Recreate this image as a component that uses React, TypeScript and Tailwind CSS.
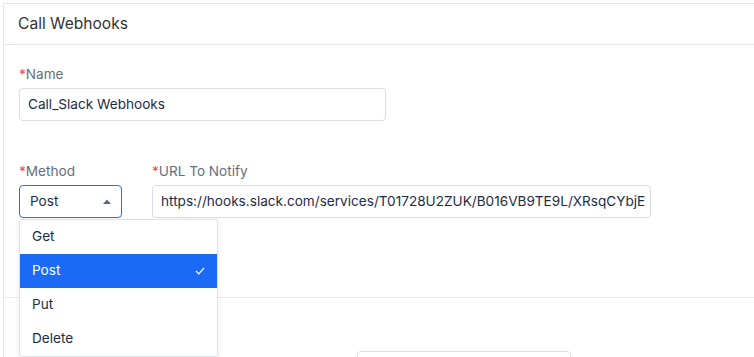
import React from 'react'

const FONT = { fontFamily: 'Inter, "Noto Sans", sans-serif' }

function Label({ children }: { children: React.ReactNode }) {
  return (
    <div className="h-5 text-[13.6px] leading-5 text-[#646e82]">
      <span className="text-[#f0454d]">*</span>
      {children}
    </div>
  )
}

const OPTIONS = ['Get', 'Post', 'Put', 'Delete']

export default function App() {
  return (
    <div className="relative w-[754px] h-[357px] overflow-hidden bg-white pt-[3px] pl-[3px]" style={FONT}>
      <div className="h-full border-l border-t border-[#e6e8ee]">
        <div className="flex h-[41px] items-center border-b border-[#e3e6ee] pl-[14px] text-[15.6px] text-[#333]">
          Call Webhooks
        </div>

        <div className="pl-[15px] pt-[19px]">
          <Label>Name</Label>
          <div className="mt-[4px] flex h-[33px] w-[367px] items-center rounded-[4px] border border-[#d9dde6] pl-[8px] text-[13.6px] text-[#1e2b45]">
            Call_Slack Webhooks
          </div>

          <div className="mt-[40px] flex gap-[30px]">
            <div className="relative">
              <Label>Method</Label>
              <div className="mt-[4px] flex h-[33px] w-[103px] items-center justify-between rounded-[4px] border border-[#2b6de8] pl-[10px] pr-[10px] text-[13.6px] text-[#1e2b45]">
                Post
                <svg width="8" height="5" viewBox="0 0 8 5" className="mb-[1px]">
                  <path d="M0 5 L4 0.5 L8 5 Z" fill="#5c667a" />
                </svg>
              </div>
              <div className="absolute left-0 top-[58px] z-10 w-[199px] rounded-[3px] border border-[#dde1e8] bg-white shadow-[0_2px_6px_rgba(0,0,0,0.08)]">
                {OPTIONS.map(o => (
                  <div
                    key={o}
                    className={
                      o === 'Post'
                        ? 'flex h-[34px] items-center justify-between bg-[#1b6af5] pb-[1px] pl-[12px] pr-[12px] text-[13.6px] text-white'
                        : 'flex h-[34px] items-center pb-[1px] pl-[12px] text-[13.6px] text-[#1e2b45]'
                    }
                  >
                    {o}
                    {o === 'Post' && (
                      <svg width="10" height="8" viewBox="0 0 10 8">
                        <path d="M1 4 L3.8 6.8 L9 1" fill="none" stroke="#fff" strokeWidth="1.2" />
                      </svg>
                    )}
                  </div>
                ))}
              </div>
            </div>

            <div>
              <Label>URL To Notify</Label>
              <div className="mt-[4px] flex h-[33px] w-[499px] items-center overflow-hidden whitespace-nowrap rounded-[4px] border border-[#d9dde6] pl-[8px] pr-[5px] text-[13.6px] text-[#1e2b45]">
                <span className="overflow-hidden">https://hooks.slack.com/services/T01728U2ZUK/B016VB9TE9L/XRsqCYbjEk2mPq</span>
              </div>
            </div>
          </div>
        </div>

        <div className="mt-[79px] border-t border-[#e6e8ee]" />
        <div className="mt-[53px] ml-[353px] h-[20px] w-[214px] rounded-t-[4px] border border-[#d9dde6]" />
      </div>
    </div>
  )
}
